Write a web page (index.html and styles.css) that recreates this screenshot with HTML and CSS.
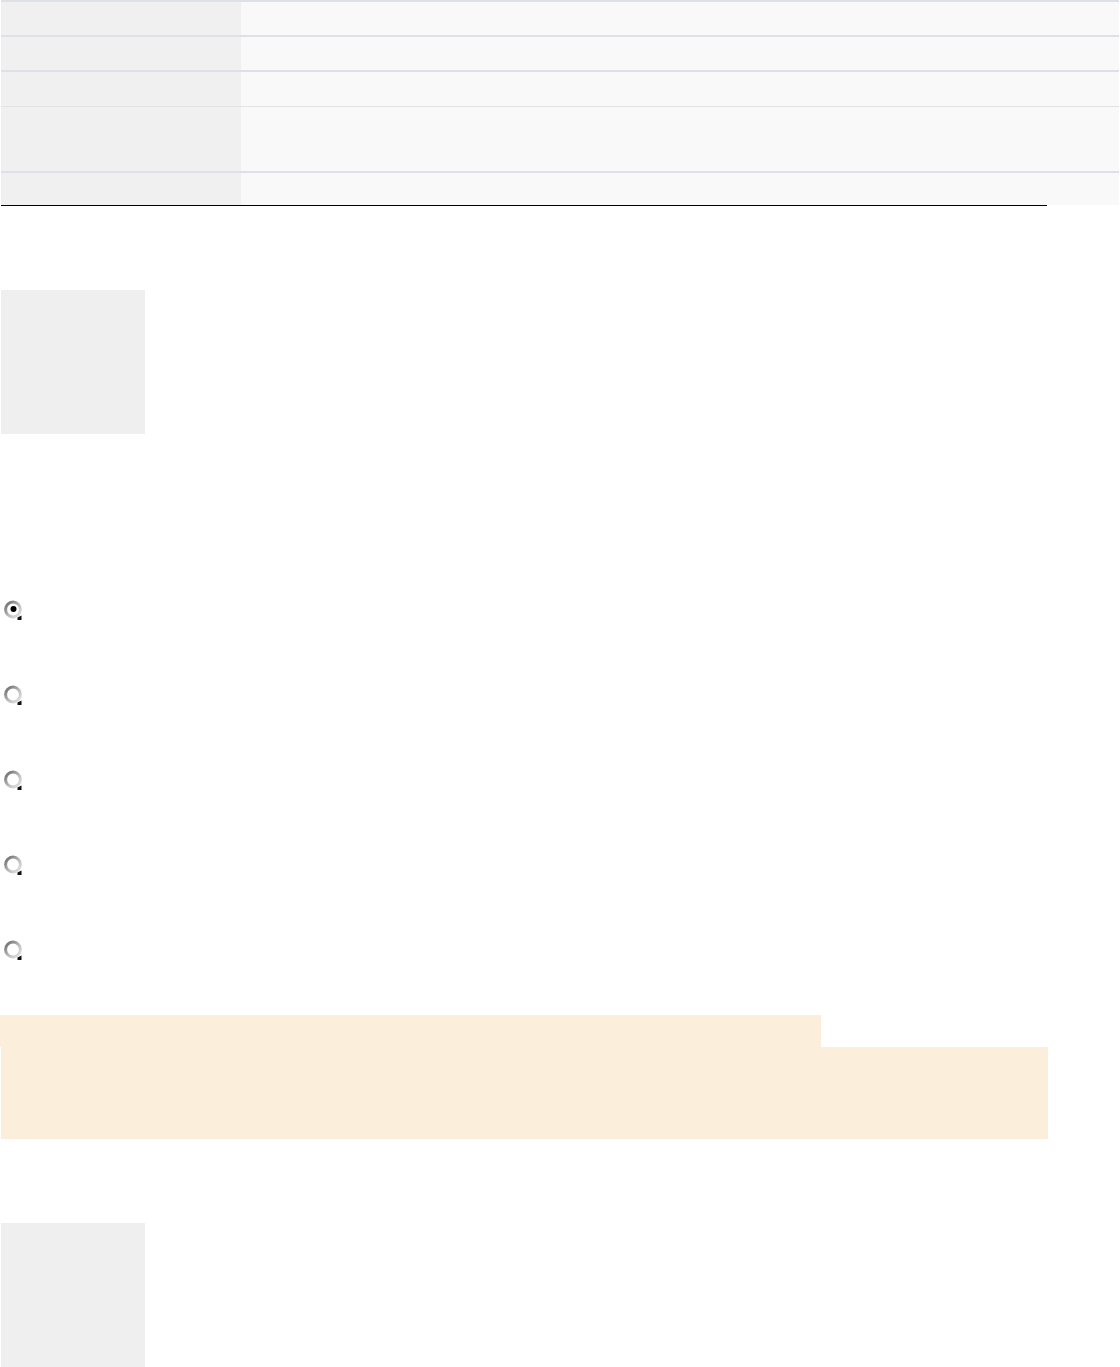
FILE: index.html
```html
<!DOCTYPE html>
<html lang="en">
<head>
<meta charset="utf-8">
<title>Page</title>
<link rel="stylesheet" href="styles.css">
</head>
<body>
<div class="page">
  <div class="infobox">
    <div class="ib-row r1"><div class="ib-th"></div><div class="ib-td"></div></div>
    <div class="ib-row r2"><div class="ib-th"></div><div class="ib-td"></div></div>
    <div class="ib-row r3"><div class="ib-th"></div><div class="ib-td"></div></div>
    <div class="ib-row r4"><div class="ib-th"></div><div class="ib-td"></div></div>
    <div class="ib-row r5"><div class="ib-th"></div><div class="ib-td"></div></div>
  </div>
  <div class="rule"></div>

  <div class="thumb first"></div>

  <ul class="choices">
    <li class="choice"><svg class="radio" viewBox="0 0 20 20" width="20" height="20"><defs><linearGradient id="rg" x1="0" y1="0" x2="1" y2="1"><stop offset="0" stop-color="#666"/><stop offset="0.55" stop-color="#bdbdbd"/><stop offset="1" stop-color="#e6e6e6"/></linearGradient></defs><circle cx="10" cy="9.5" r="7.4" fill="#fff" stroke="url(#rg)" stroke-width="3"/><circle cx="10.5" cy="9" r="3" fill="#000"/><path d="M14.5 17.5 L18.5 15.5 L18.5 20 L14.5 20 Z" fill="#111"/></svg></li>
    <li class="choice"><svg class="radio" viewBox="0 0 20 20" width="20" height="20"><circle cx="10" cy="9.5" r="7.4" fill="#fff" stroke="url(#rg)" stroke-width="3"/><path d="M14.5 17.5 L18.5 15.5 L18.5 20 L14.5 20 Z" fill="#111"/></svg></li>
    <li class="choice"><svg class="radio" viewBox="0 0 20 20" width="20" height="20"><circle cx="10" cy="9.5" r="7.4" fill="#fff" stroke="url(#rg)" stroke-width="3"/><path d="M14.5 17.5 L18.5 15.5 L18.5 20 L14.5 20 Z" fill="#111"/></svg></li>
    <li class="choice"><svg class="radio" viewBox="0 0 20 20" width="20" height="20"><circle cx="10" cy="9.5" r="7.4" fill="#fff" stroke="url(#rg)" stroke-width="3"/><path d="M14.5 17.5 L18.5 15.5 L18.5 20 L14.5 20 Z" fill="#111"/></svg></li>
    <li class="choice"><svg class="radio" viewBox="0 0 20 20" width="20" height="20"><circle cx="10" cy="9.5" r="7.4" fill="#fff" stroke="url(#rg)" stroke-width="3"/><path d="M14.5 17.5 L18.5 15.5 L18.5 20 L14.5 20 Z" fill="#111"/></svg></li>
  </ul>

  <div class="notice">
    <div class="notice-head"></div>
    <div class="notice-body"></div>
  </div>

  <div class="thumb second"></div>
</div>
</body>
</html>
```

FILE: styles.css
```css
html, body {
  margin: 0;
  padding: 0;
  background: #fff;
  font-family: "Liberation Sans", Arial, sans-serif;
  font-size: 14px;
  color: #202122;
}

.page {
  padding-left: 1px;
  height: 1367px;
  overflow: hidden;
}

.infobox {
  width: 1118px;
  display: flex;
  flex-direction: column;
}

.ib-row {
  display: grid;
  grid-template-columns: 240px 1fr;
  border-top: 2px solid #dde1e5;
}

.ib-th { background: #f0f0f0; }
.ib-td { background: #f9f9f9; }

.r1 { height: 33px; }
.r2 { height: 33px; }
.r3 { height: 34px; }
.r4 { height: 64px; border-top: 1px solid #e3e3e3; }
.r5 { height: 32px; }

.rule {
  width: 1046px;
  height: 1px;
  background: #000;
}

.thumb {
  width: 144px;
  height: 144px;
  background: #efefef;
}

.thumb.first { margin-top: 84px; }

.choices {
  list-style: none;
  margin: 166px 0 0 0;
  padding: 0 0 0 2px;
  display: flex;
  flex-direction: column;
  gap: 65px;
}

.choice {
  height: 20px;
  display: flex;
  align-items: center;
}

.radio { display: block; }

.notice {
  margin-top: 55px;
  width: 1047px;
}

.notice-head {
  margin-left: -1px;
  width: 821px;
  height: 32px;
  background: #fbeedb;
}

.notice-body {
  height: 92px;
  background: #fbeedb;
}

.thumb.second { margin-top: 84px; }
```
